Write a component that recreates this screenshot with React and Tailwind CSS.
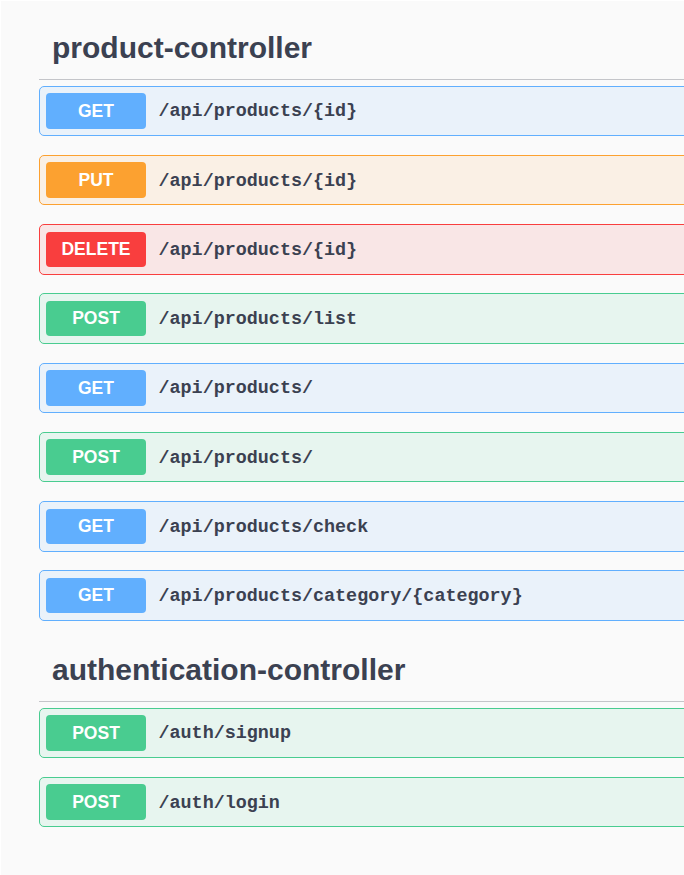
import React from 'react'

const methods = {
  GET: { badge: 'bg-[#61affe]', block: 'border-[#61affe] bg-[rgba(97,175,254,0.1)]' },
  PUT: { badge: 'bg-[#fca130]', block: 'border-[#fca130] bg-[rgba(252,161,48,0.1)]' },
  DELETE: { badge: 'bg-[#f93e3e]', block: 'border-[#f93e3e] bg-[rgba(249,62,62,0.1)]' },
  POST: { badge: 'bg-[#49cc90]', block: 'border-[#49cc90] bg-[rgba(73,204,144,0.1)]' },
}

const sections = [
  {
    name: 'product-controller',
    ops: [
      ['GET', '/api/products/{id}'],
      ['PUT', '/api/products/{id}'],
      ['DELETE', '/api/products/{id}'],
      ['POST', '/api/products/list'],
      ['GET', '/api/products/'],
      ['POST', '/api/products/'],
      ['GET', '/api/products/check'],
      ['GET', '/api/products/category/{category}'],
    ],
  },
  {
    name: 'authentication-controller',
    ops: [
      ['POST', '/auth/signup'],
      ['POST', '/auth/login'],
    ],
  },
]

function Operation({ method, path }) {
  const m = methods[method]
  return (
    <div className={`flex items-center h-[50.5px] mb-[18.75px] border rounded-[5px] px-[6px] ${m.block}`}>
      <span
        className={`w-[100px] h-[35.5px] flex items-center justify-center rounded-[4px] text-white font-bold text-[17.5px] ${m.badge}`}
        style={{ fontFamily: '"Liberation Sans", Arial, sans-serif' }}
      >
        {method}
      </span>
      <span
        className="pl-[12.5px] pt-[3px] text-[18.4px] font-bold text-[#3b4151]"
        style={{ fontFamily: '"Liberation Mono", "DejaVu Sans Mono", monospace' }}
      >
        {path}
      </span>
    </div>
  )
}

export default function App() {
  return (
    <div className="w-[684px] h-[875px] overflow-hidden bg-[#fafafa] border-l border-t border-white">
      <div className="w-[720px] ml-[38px] pt-[16.5px]">
        {sections.map((section) => (
          <div key={section.name} className="mb-[3px]">
            <h3
              className="pt-[12.5px] pb-[12.5px] pl-[13px] mb-[6px] border-b border-[#c4c5c9] text-[30px] leading-[36px] font-bold text-[#3b4151]"
              style={{ fontFamily: '"Liberation Sans", Arial, sans-serif' }}
            >
              {section.name}
            </h3>
            {section.ops.map(([method, path], i) => (
              <Operation key={i} method={method} path={path} />
            ))}
          </div>
        ))}
      </div>
    </div>
  )
}
